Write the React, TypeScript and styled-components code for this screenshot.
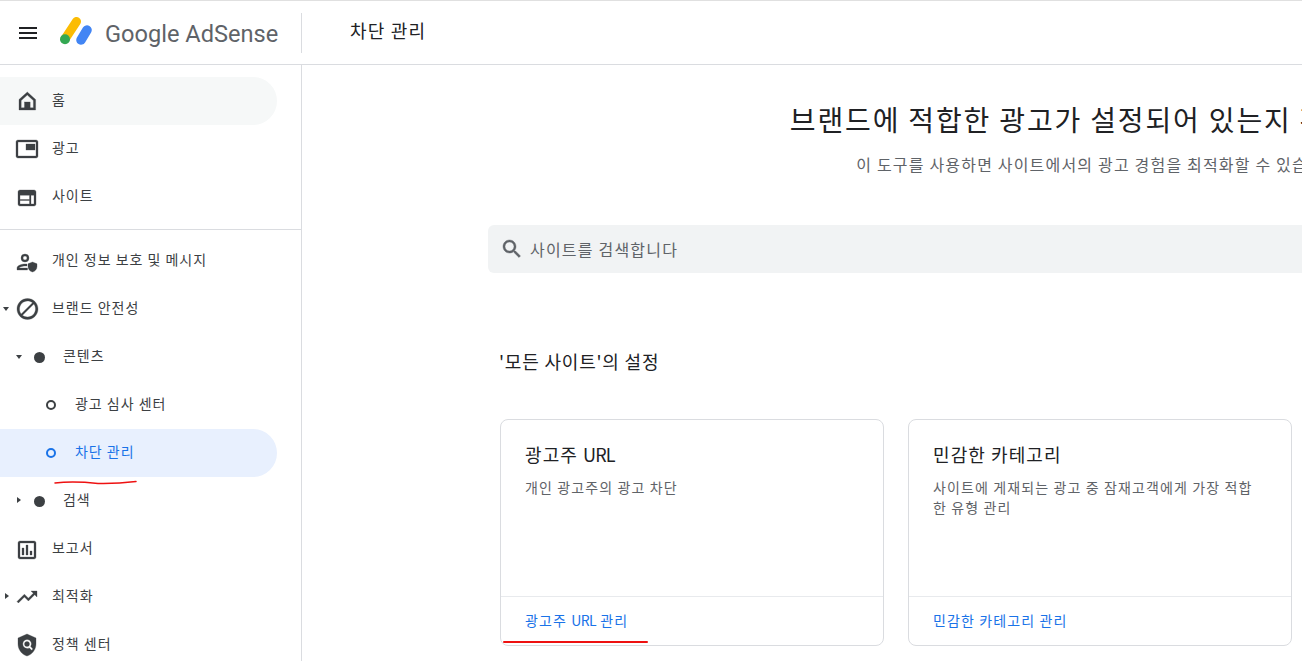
import React from "react";
import styled, { createGlobalStyle } from "styled-components";

const Global = createGlobalStyle`
  html, body { margin: 0; padding: 0; height: 100%; overflow: hidden; background: #fff; }
  body { font-family: Roboto, "Noto Sans CJK KR", sans-serif; color: #202124; }
`;
const Page = styled.div`
  position: relative; width: 1302px; height: 661px; overflow: hidden;
  display: flex; flex-direction: column; border-top: 1px solid #e0e0e0; box-sizing: border-box;
`;
const Header = styled.header`
  flex: 0 0 64px; display: flex; align-items: center; border-bottom: 1px solid #dadce0; box-sizing: border-box; height: 64px;
`;
const Brand = styled.div`
  width: 302px; height: 40px; flex: none; box-sizing: border-box; display: flex; align-items: center; padding-left: 16px; border-right: 1px solid #dadce0;
`;
const Logo = styled.svg`margin: -2px 0 0 20px; flex: none;`;
const LogoText = styled.span`
  font-family: Roboto, sans-serif; font-size: 23.6px; color: #5f6368; margin-left: 12px; white-space: nowrap; margin-top: 3px;
`;
const PageTitle = styled.div`
  margin: -6px 0 0 48px; font-size: 18px; letter-spacing: 0.065em; color: #202124; font-family: "Noto Sans CJK KR", sans-serif;
`;
const Body = styled.div`flex: 1; display: flex; min-height: 0;`;
const Side = styled.nav`
  width: 302px; flex: none; box-sizing: border-box; border-right: 1px solid #dadce0; padding-top: 12px; overflow: hidden;
`;
const Row = styled.div<{ $state?: "hover" | "active" }>`
  width: 277px; height: 48px; flex: none; position: relative; display: flex; align-items: center; box-sizing: border-box;
  border-radius: 0 24px 24px 0;
  background: ${p => p.$state === "hover" ? "#f6f8f8" : p.$state === "active" ? "#e8f0fe" : "transparent"};
  color: ${p => p.$state === "active" ? "#1a73e8" : "#3c4043"};
`;
const RowIcon = styled.span<{ $indent: number }>`
  margin-left: ${p => p.$indent}px; width: 24px; height: 24px; flex: none; display: flex; align-items: center; justify-content: center; color: inherit;
`;
const Label = styled.span<{ $gap: number }>`
  margin-left: ${p => p.$gap}px; font-family: "Noto Sans CJK KR", sans-serif; font-size: 14px; letter-spacing: 0.07em; white-space: nowrap; position: relative; top: -2px;
`;
const Caret = styled.span<{ $left: number; $open?: boolean }>`
  position: absolute; left: ${p => p.$left}px; top: 50%; width: 0; height: 0;
  ${p => p.$open
    ? `margin-top: -2px; border-left: 3.5px solid transparent; border-right: 3.5px solid transparent; border-top: 4px solid #3c4043;`
    : `margin-top: -4px; border-top: 3.5px solid transparent; border-bottom: 3.5px solid transparent; border-left: 4px solid #3c4043;`}
`;
const Divider = styled.hr`
  margin: 8px 0 7px; border: 0; border-top: 1px solid #dadce0;
`;
const Dot = styled.span`width: 11px; height: 11px; border-radius: 50%; background: #3c4043;`;
const Ring = styled.span`width: 10px; height: 10px; border-radius: 50%; border: 2px solid currentColor; box-sizing: border-box;`;
const Main = styled.main`flex: 1; min-width: 0; overflow: hidden; position: relative;`;
const Content = styled.div`
  width: 1218px; margin-left: 186px; box-sizing: border-box; padding-top: 32px; font-family: "Noto Sans CJK KR", sans-serif;
`;
const Hero = styled.h1`
  margin: 0; padding-left: 6px; font-weight: 400; font-size: 28px; letter-spacing: 0.066em; line-height: 44px; text-align: center; color: #202124; white-space: nowrap;
`;
const Sub = styled.p`
  margin: 11px 0 0; padding-left: 2px; font-size: 16px; letter-spacing: 0.074em; line-height: 24px; text-align: center; color: #5f6368; white-space: nowrap;
`;
const Search = styled.div`
  margin-top: 49px; height: 48px; border-radius: 6px; background: #f1f3f4; display: flex; align-items: center; padding-left: 12px; color: #5f6368; font-size: 16px;
`;
const SearchText = styled.span`margin-left: 6px; letter-spacing: 0.075em;`;
const Section = styled.h2`
  margin: 75px 0 0 11px; font-weight: 400; font-size: 18px; letter-spacing: 0.045em; line-height: 26px; color: #202124;
`;
const Cards = styled.div`display: flex; gap: 24px; margin: 45px 0 0 12px;`;
const Card = styled.section`
  width: 384px; height: 227px; flex: none; box-sizing: border-box; border: 1px solid #dadce0; border-radius: 8px; display: flex; flex-direction: column;
`;
const CardBody = styled.div`flex: 1; padding: 20px 36px 0 24px;`;
const CardTitle = styled.h3`margin: 0; font-weight: 400; font-size: 18px; letter-spacing: 0.06em; line-height: 28px; color: #202124;`;
const CardText = styled.p`margin: 9px 0 0; font-size: 14px; letter-spacing: 0.08em; line-height: 20px; color: #5f6368; word-break: break-all;`;
const CardFoot = styled.div`
  height: 49px; flex: none; box-sizing: border-box; border-top: 1px solid #e8eaed; padding: 13px 24px 0; font-size: 14px; letter-spacing: 0.08em; line-height: 20px; color: #1a73e8;
`;
const Latin = styled.span<{ $spacing: number }>`letter-spacing: ${p => p.$spacing}px;`;
const Scribble = styled.svg<{ $left: number; $top: number }>`
  position: absolute; left: ${p => p.$left}px; top: ${p => p.$top}px; pointer-events: none;
`;
const IconSvg = styled.svg`fill: currentColor; stroke: currentColor; stroke-width: 0.3;`;

const I = ({ d, children }: { d?: string; children?: React.ReactNode }) => (
  <IconSvg width={24} height={24} viewBox="0 0 24 24">{d && <path d={d} fillRule="evenodd" />}{children}</IconSvg>
);

export default function App() {
  return (
    <Page>
      <Global />
      <Header>
        <Brand>
          <svg width="24" height="24" viewBox="0 0 24 24" fill="#202124"><path d="M3 18h18v-2H3v2zm0-5h18v-2H3v2zm0-7v2h18V6H3z" /></svg>
          <Logo width="33" height="29" viewBox="0 0 33 29">
            <line x1="16.5" y1="4.500" x2="5" y2="22" stroke="#fbbc04" strokeWidth="9" strokeLinecap="round" />
            <line x1="27" y1="13" x2="21" y2="23" stroke="#4285f4" strokeWidth="9.500" strokeLinecap="round" />
            <circle cx="5" cy="22.300" r="5" fill="#34a853" />
          </Logo>
          <LogoText>Google AdSense</LogoText>
        </Brand>
        <PageTitle>차단 관리</PageTitle>
      </Header>
      <Body>
        <Side>
          <Row $state="hover">
            <RowIcon $indent={15}><I><path fillRule="evenodd" d="M12.300 3 4 10.500V21h16.600V10.500L12.300 3zM6.200 11.600l6.100-5.500 6.100 5.500v7.200H6.200z" /><rect x="9.500" y="13" width="5.600" height="6" /></I></RowIcon>
            <Label $gap={13}>홈</Label>
          </Row>
          <Row>
            <RowIcon $indent={15}><I><path fillRule="evenodd" d="M21 3H3c-1.100 0-2 .9-2 2v14c0 1.100.9 2 2 2h18c1.100 0 2-.9 2-2V5c0-1.100-.9-2-2-2zm0 16H3V5h18v14z" /><rect x="11" y="7" width="9" height="6" /></I></RowIcon>
            <Label $gap={13}>광고</Label>
          </Row>
          <Row>
            <RowIcon $indent={15}><I d="M5 5h14c1.100 0 2 .9 2 2v12c0 1.100-.9 2-2 2H5c-1.100 0-2-.9-2-2V7c0-1.100.9-2 2-2zM5 10.300v4.200h9.500v-4.200zM5 15.500V19h9.500v-3.500zM16 10.300V19h3v-8.700z" /></RowIcon>
            <Label $gap={13}>사이트</Label>
          </Row>
          <Divider />
          <Row>
            <RowIcon $indent={15}><I d="M10 13a4 4 0 1 0 0-8 4 4 0 0 0 0 8zm0-6a2 2 0 1 1 0 4 2 2 0 0 1 0-4zM4 19c.2-.7 3.300-2 6-2h2v-2h-2c-2.700 0-8 1.300-8 4v2h10.500v-2H4zM17.500 13 13 14.800v2.700c0 2.700 1.900 5 4.500 5.500 2.600-.5 4.500-2.800 4.500-5.500v-2.700L17.500 13z" /></RowIcon>
            <Label $gap={13}>개인 정보 보호 및 메시지</Label>
          </Row>
          <Row>
            <Caret $left={3} $open />
            <RowIcon $indent={15}><I d="M12.500 1.500C6.700 1.500 2 6.200 2 12s4.700 10.500 10.500 10.500S23 17.800 23 12 18.300 1.500 12.500 1.500zM4.500 12c0-4.400 3.600-8 8-8 1.900 0 3.600.6 5 1.700L6.200 17c-1.100-1.400-1.700-3.100-1.700-5zm8 8c-1.900 0-3.600-.6-5-1.700L18.800 7c1.100 1.400 1.700 3.100 1.700 5 0 4.400-3.600 8-8 8z" /></RowIcon>
            <Label $gap={13}>브랜드 안전성</Label>
          </Row>
          <Row>
            <Caret $left={16} $open />
            <RowIcon $indent={27}><Dot /></RowIcon>
            <Label $gap={12}>콘텐츠</Label>
          </Row>
          <Row>
            <RowIcon $indent={39}><Ring /></RowIcon>
            <Label $gap={12}>광고 심사 센터</Label>
          </Row>
          <Row $state="active">
            <RowIcon $indent={39}><Ring /></RowIcon>
            <Label $gap={12}>차단 관리</Label>
          </Row>
          <Row>
            <Caret $left={17} />
            <RowIcon $indent={27}><Dot /></RowIcon>
            <Label $gap={12}>검색</Label>
          </Row>
          <Row>
            <RowIcon $indent={15}><I d="M19 4H5c-1.100 0-2 .9-2 2v14c0 1.100.9 2 2 2h14c1.100 0 2-.9 2-2V6c0-1.100-.9-2-2-2zm0 16H5V6h14v14zM7 11h2v7H7zM11 8h2v10h-2zM15 14h2v4h-2z" /></RowIcon>
            <Label $gap={13}>보고서</Label>
          </Row>
          <Row>
            <Caret $left={5} />
            <RowIcon $indent={15}><I d="M16 6l2.290 2.290-4.880 4.880-4-4L2 16.590 3.410 18l6-6 4 4 6.300-6.290L22 12V6z" /></RowIcon>
            <Label $gap={13}>최적화</Label>
          </Row>
          <Row>
            <RowIcon $indent={15}><I d="M12 1 3 5v6c0 5.500 3.800 10.700 9 12 5.200-1.300 9-6.500 9-12V5l-9-4zm0 5.500a4.500 4.500 0 0 1 3.700 7.100l2.300 2.300-1.400 1.400-2.300-2.300A4.500 4.500 0 1 1 12 6.500zm0 2a2.500 2.500 0 1 0 0 5 2.500 2.500 0 0 0 0-5z" /></RowIcon>
            <Label $gap={13}>정책 센터</Label>
          </Row>
        </Side>
        <Main>
          <Content>
            <Hero>브랜드에 적합한 광고가 설정되어 있는지 확인하기</Hero>
            <Sub>이 도구를 사용하면 사이트에서의 광고 경험을 최적화할 수 있습니다</Sub>
            <Search>
              <svg width="24" height="24" viewBox="0 0 24 24" fill="#5f6368" stroke="#5f6368" strokeWidth="0.4"><path d="M15.500 14h-.79l-.28-.27C15.410 12.590 16 11.110 16 9.500 16 5.910 13.090 3 9.500 3S3 5.910 3 9.500 5.910 16 9.500 16c1.610 0 3.090-.59 4.230-1.570l.27.28v.79l5 4.990L20.490 19l-4.990-5zm-6 0C7.010 14 5 11.990 5 9.500S7.010 5 9.500 5 14 7.010 14 9.500 11.990 14 9.500 14z" /></svg>
              <SearchText>사이트를 검색합니다</SearchText>
            </Search>
            <Section>'모든 사이트'의 설정</Section>
            <Cards>
              <Card>
                <CardBody>
                  <CardTitle>광고주 <Latin $spacing={-0.8}>URL</Latin></CardTitle>
                  <CardText>개인 광고주의 광고 차단</CardText>
                </CardBody>
                <CardFoot>광고주 <Latin $spacing={-0.6}>URL</Latin> 관리</CardFoot>
              </Card>
              <Card>
                <CardBody>
                  <CardTitle>민감한 카테고리</CardTitle>
                  <CardText>사이트에 게재되는 광고 중 잠재고객에게 가장 적합한 유형 관리</CardText>
                </CardBody>
                <CardFoot>민감한 카테고리 관리</CardFoot>
              </Card>
            </Cards>
          </Content>
        </Main>
      </Body>
      <Scribble $left={54} $top={478} width="84" height="8" viewBox="0 0 84 8">
        <path d="M1 4C18 2 30 3 44 4.500 58 4.800 70 4 82 2.500" fill="none" stroke="#ee1111" strokeWidth="1.500" strokeLinecap="round" />
      </Scribble>
      <Scribble $left={503} $top={639} width="146" height="4" viewBox="0 0 146 4">
        <path d="M1 2H144" fill="none" stroke="#ee1111" strokeWidth="2" strokeLinecap="round" />
      </Scribble>
    </Page>
  );
}
